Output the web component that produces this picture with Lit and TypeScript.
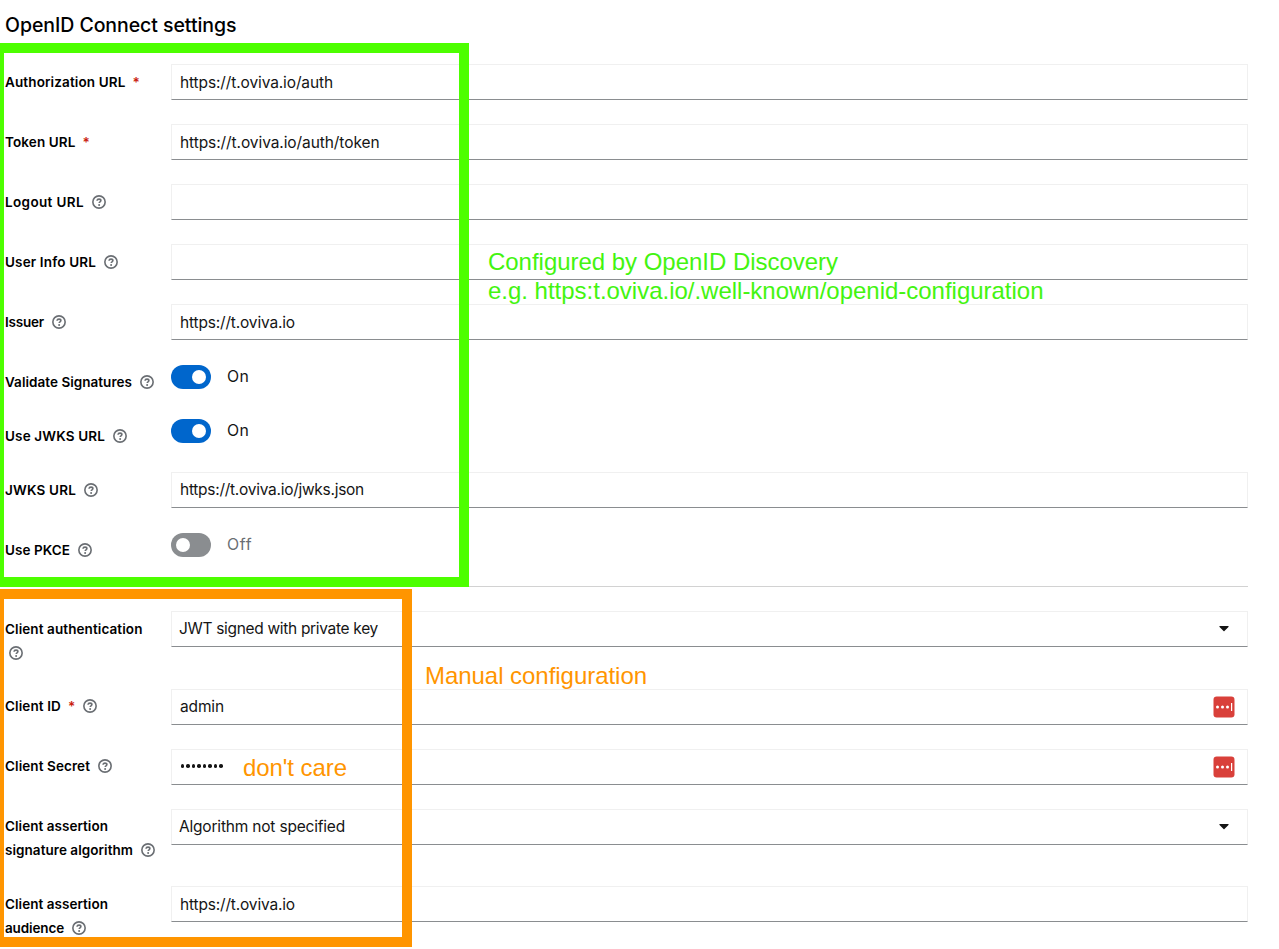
import { LitElement, html, css, nothing } from "lit";
import { customElement, property } from "lit/decorators.js";

/** Text run whose tracking is adjusted so that it fills an exact width. */
@customElement("fit-text")
class FitText extends LitElement {
  static styles = css`
    :host { display: inline-block; white-space: pre; }
  `;
  @property() text = "";
  @property({ type: Number }) width = 0;
  render() {
    return html`<span>${this.text}</span>`;
  }
  updated() {
    const span = this.renderRoot.querySelector("span") as HTMLElement;
    span.style.letterSpacing = "0";
    const natural = span.getBoundingClientRect().width;
    const step = (this.width - natural) / this.text.length;
    span.style.letterSpacing = step.toFixed(4) + "px";
  }
}

const fit = (text: string, width: number) =>
  html`<fit-text .text=${text} .width=${width}></fit-text>`;

const help = html`<svg class="help" viewBox="0 0 14 14" width="14" height="14">
  <circle cx="7" cy="7" r="6.15" fill="none" stroke="#6a6e73" stroke-width="1.6" />
  <path d="M5 5.7C5.1 4.6 6 4.1 7 4.1c1.1 0 1.9.6 1.9 1.5 0 1.2-1.7 1.25-1.7 2.4" fill="none" stroke="#6a6e73" stroke-width="1.6" />
  <circle cx="7.1" cy="9.9" r="1" fill="#6a6e73" />
</svg>`;

const caret = html`<svg class="caret" viewBox="0 0 320 512" width="10" height="16">
  <path fill="#151515" d="M31.3 192h257.3c17.8 0 26.7 21.5 14.1 34.1L174.1 354.8c-7.8 7.8-20.5 7.8-28.3 0L17.2 226.1C4.6 213.5 13.5 192 31.3 192z" />
</svg>`;

const vault = html`<svg class="vault" viewBox="0 0 22 22" width="22" height="22">
  <rect x=".5" y=".5" width="21" height="21" rx="3.2" fill="#d9403a" />
  <circle cx="4.5" cy="11" r="1.5" fill="#fff" />
  <circle cx="9.5" cy="11" r="1.5" fill="#fff" />
  <circle cx="14.5" cy="11" r="1.5" fill="#fff" />
  <rect x="18" y="7" width="1.2" height="8" fill="#fff" />
</svg>`;

type Run = [string, number];
interface Field {
  label: Run[];
  required?: boolean;
  help?: boolean | "below";
  kind: "text" | "select" | "switch" | "password";
  value?: Run;
  on?: boolean;
  vault?: boolean;
  raised?: boolean;
  high?: boolean;
}

const discovered: Field[] = [
  { label: [["Authorization URL", 120.5]], required: true, kind: "text", value: ["https://t.oviva.io/auth", 153] },
  { label: [["Token URL", 70.5]], required: true, kind: "text", value: ["https://t.oviva.io/auth/token", 199.5] },
  { label: [["Logout URL", 79]], help: true, kind: "text" },
  { label: [["User Info URL", 91]], help: true, kind: "text" },
  { label: [["Issuer", 39]], help: true, kind: "text", value: ["https://t.oviva.io", 115] },
  { label: [["Validate Signatures", 127]], help: true, kind: "switch", on: true },
  { label: [["Use JWKS URL", 100]], help: true, kind: "switch", on: true },
  { label: [["JWKS URL", 71]], help: true, kind: "text", value: ["https://t.oviva.io/jwks.json", 184], high: true },
  { label: [["Use PKCE", 65]], help: true, kind: "switch", on: false },
];

const manual: Field[] = [
  { label: [["Client authentication", 137.5]], help: "below", kind: "select", value: ["JWT signed with private key", 199] },
  { label: [["Client ID", 56]], required: true, help: true, kind: "text", value: ["admin", 44], vault: true, raised: true, high: true },
  { label: [["Client Secret", 85]], help: true, kind: "password", vault: true, raised: true },
  { label: [["Client assertion", 103], ["signature algorithm", 128]], help: true, kind: "select", value: ["Algorithm not specified", 166], raised: true },
  { label: [["Client assertion", 103], ["audience", 59]], help: true, kind: "text", value: ["https://t.oviva.io", 115] },
];

@customElement("app-root")
class AppRoot extends LitElement {
  static styles = css`
    :host {
      display: block;
      position: relative;
      width: 1279px;
      height: 949px;
      overflow: hidden;
      background: #fff;
      color: #151515;
      font-family: Inter, "Noto Sans", sans-serif;
    }
    h1 {
      margin: 0 0 12px;
      padding: 12px 0 0 5px;
      height: 52px;
      box-sizing: border-box;
      font-size: 19.5px;
      line-height: 26px;
      font-weight: 500;
      color: #000;
    }
    .form { display: flex; flex-direction: column; gap: 24px; padding: 0 31px 0 5px; }
    .row { display: grid; grid-template-columns: 166px 1fr; align-items: start; }
    .row.two { height: 53px; }
    .label { padding-top: 6px; font-size: 13.5px; line-height: 24px; font-weight: 600; color: #000; }
    .raised .label { padding-top: 5px; }
    .line { display: flex; align-items: center; height: 24px; }
    .req { width: 6px; margin-left: 7px; padding-bottom: 1px; color: #c9190b; font-size: 13.5px; font-weight: 600; }
    .help { display: block; margin-left: 8px; }
    .req + .help { margin-left: 9px; }
    .line.below .help { margin-left: 4px; }
    .box {
      box-sizing: border-box;
      height: 36px;
      display: flex;
      align-items: center;
      padding: 0 13px 0 8px;
      border: 1px solid #f0f0f0;
      border-bottom-color: #8a8d90;
      font-size: 15.5px;
      line-height: 24px;
    }
    .text fit-text { padding-top: 1px; }
    .high .text fit-text { padding-top: 0; }
    .select { padding: 0 18px 0 7px; }
    .spacer { flex: 1; }
    .caret { display: block; margin-bottom: 2px; }
    .vault { display: block; margin-right: -1px; }
    .dots { display: flex; gap: 2px; padding: 0 .5px; margin-top: -2px; }
    .dots i { width: 3.5px; height: 3.5px; border-radius: 50%; background: #151515; }
    .switch {
      display: flex;
      align-items: flex-start;
      gap: 16px;
      height: 30px;
      box-sizing: border-box;
      padding-top: 1px;
      font-size: 15.8px;
      line-height: 24px;
      color: #6a6e73;
    }
    .switch.on { color: #151515; }
    .track { width: 40px; height: 24px; border-radius: 12px; background: #8a8d90; display: flex; align-items: center; padding: 0 5px; box-sizing: border-box; }
    .track i { width: 14px; height: 14px; border-radius: 50%; background: #fff; }
    .on .track { background: #06c; justify-content: flex-end; }
    hr { width: 100%; margin: 0; border: 0; height: 1px; background: #d2d2d2; }
    .frame { position: absolute; box-sizing: border-box; left: -6px; border: 10px solid; }
    .green { top: 43px; width: 475px; height: 544px; border-color: #4dff00; }
    .orange { top: 589px; width: 418px; height: 358px; border-color: #ff9500; }
    .note {
      position: absolute;
      font-family: "Liberation Sans", Arial, sans-serif;
      font-size: 24px;
      line-height: 29px;
      white-space: nowrap;
    }
    .note fit-text { display: block; }
    .discovery { left: 488px; top: 247px; color: #43f410; }
    .manual { left: 425px; top: 661px; color: #ff9500; }
    .care { left: 243px; top: 753px; color: #ff9500; }
  `;

  control(f: Field) {
    if (f.kind === "switch") {
      return html`<div class="switch ${f.on ? "on" : ""}">
        <span class="track"><i></i></span>${fit(f.on ? "On" : "Off", f.on ? 22.5 : 25.5)}
      </div>`;
    }
    return html`<div class="box ${f.kind}">
      ${f.kind === "password"
        ? html`<span class="dots">${Array.from({ length: 8 }, () => html`<i></i>`)}</span>`
        : f.value ? fit(...f.value) : nothing}
      <span class="spacer"></span>
      ${f.kind === "select" ? caret : f.vault ? vault : nothing}
    </div>`;
  }

  row(f: Field) {
    const last = f.label.length - 1;
    return html`<div class="row ${last > 0 ? "two" : ""} ${f.raised ? "raised" : ""} ${f.high ? "high" : ""}">
      <div class="label">
        ${f.label.map(([t, w], i) => html`<div class="line">
          ${fit(t, w)}${i === last && f.required ? html`<span class="req">*</span>` : nothing}${i === last && f.help === true ? help : nothing}
        </div>`)}
        ${f.help === "below" ? html`<div class="line below">${help}</div>` : nothing}
      </div>
      ${this.control(f)}
    </div>`;
  }

  render() {
    return html`
      <h1>${fit("OpenID Connect settings", 231.5)}</h1>
      <div class="form">
        ${discovered.map((f) => this.row(f))}
        <hr />
        ${manual.map((f) => this.row(f))}
      </div>
      <div class="frame green"></div>
      <div class="frame orange"></div>
      <div class="note discovery">
        ${fit("Configured by OpenID Discovery", 350)}
        ${fit("e.g. https:t.oviva.io/.well-known/openid-configuration", 555.5)}
      </div>
      <div class="note manual">${fit("Manual configuration", 222)}</div>
      <div class="note care">${fit("don't care", 104)}</div>
    `;
  }
}
